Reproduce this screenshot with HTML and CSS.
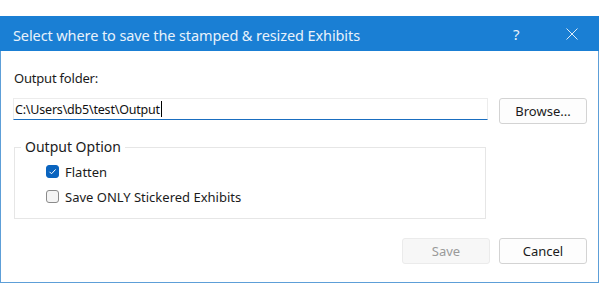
FILE: index.html
```html
<!DOCTYPE html>
<html>
<head>
<meta charset="utf-8">
<link rel="stylesheet" href="styles.css">
</head>
<body>
<div class="window">
  <div class="titlebar">
    <span class="title">Select where to save the stamped &amp; resized Exhibits</span>
    <span class="help">?</span>
    <span class="close"><svg width="12" height="12" viewBox="0 0 12 12"><path d="M0.5 0.5 L11.5 11.5 M11.5 0.5 L0.5 11.5" stroke="#dcebf8" stroke-width="1" fill="none"/></svg></span>
  </div>
  <div class="content">
    <div class="label">Output folder:</div>
    <div class="row">
      <div class="input"><span class="value">C:\Users\db5\test\Output</span><span class="caret"></span></div>
      <button class="btn browse">Browse...</button>
    </div>
    <fieldset class="group">
      <legend class="legend">Output Option</legend>
      <label class="check-row"><span class="box checked"><svg width="13" height="13" viewBox="0 0 13 13"><path d="M3.5 6.8 L5.5 8.8 L9.6 4.4" stroke="#ffffff" stroke-width="1" fill="none"/></svg></span><span class="check-text">Flatten</span></label>
      <label class="check-row"><span class="box"></span><span class="check-text">Save ONLY Stickered Exhibits</span></label>
    </fieldset>
    <div class="actions">
      <button class="btn disabled">Save</button>
      <button class="btn">Cancel</button>
    </div>
  </div>
</div>
</body>
</html>
```
FILE: styles.css
```css
html, body {
  margin: 0;
  padding: 0;
  background: #ffffff;
}
body {
  font-family: "Noto Sans", "Open Sans", sans-serif;
  color: #1b1b1b;
}
.window {
  margin-top: 16px;
  width: 597px;
  border: 1px solid #5d9fd8;
  border-top: none;
  background: #ffffff;
}
.titlebar {
  height: 35px;
  background: #1a7fd4;
  display: flex;
  align-items: center;
  color: #e8f2fb;
  margin-left: -1px;
  margin-right: -1px;
  padding-left: 13px;
}
.title {
  font-size: 14.5px;
  flex: 1;
  line-height: 20px;
  padding-top: 2px;
  letter-spacing: -0.1px;
}
.help {
  font-size: 15px;
  width: 16px;
  margin-right: 37px;
  line-height: 20px;
}
.close {
  width: 12px;
  height: 12px;
  margin-right: 21px;
  display: flex;
}
.content {
  padding: 18px 11px 18px 12px;
  display: flex;
  flex-direction: column;
}
.label {
  font-size: 13px;
  line-height: 18px;
  margin-left: 1px;
  height: 18px;
  margin-bottom: 11px;
  letter-spacing: -0.2px;
}
.row {
  display: flex;
  align-items: flex-start;
  gap: 11px;
}
.input {
  width: 472px;
  height: 20px;
  border: 1px solid #ececec;
  border-bottom: 1px solid #1a6ec0;
  display: flex;
  align-items: center;
  padding-left: 1px;
  font-size: 12.5px;
  color: #111;
}
.value {
  line-height: 18px;
  padding-top: 1px;
  letter-spacing: -0.2px;
}
.caret {
  width: 1px;
  height: 16px;
  background: #000;
  margin-left: 1px;
}
.btn {
  font-family: "Noto Sans", "Open Sans", sans-serif;
  font-size: 13px;
  width: 88px;
  height: 26px;
  border: 1px solid #d3d3d3;
  border-radius: 3px;
  background: #fdfdfd;
  color: #1b1b1b;
  padding: 0;
  line-height: 22px;
}
.group {
  margin: 14px 0 0 1px;
  width: 472px;
  box-sizing: border-box;
  border: 1px solid #e6e6e6;
  padding: 0 6px 9px 6px;
  min-width: 0;
  display: flex;
  flex-direction: column;
}
.legend {
  font-size: 14px;
  padding: 0 4px;
  line-height: 18px;
  color: #1b1b1b;
}
.check-row {
  display: flex;
  align-items: center;
  height: 25px;
  margin-left: 25px;
}
.check-row:first-of-type {
  margin-top: 3px;
}
.box {
  width: 13px;
  height: 13px;
  box-sizing: border-box;
  border: 1px solid #8b8b8b;
  border-radius: 3px;
  background: #f4f4f4;
  margin-right: 6px;
  display: flex;
}
.box.checked {
  background: #0a64bf;
  border-color: #0a64bf;
}
.box.checked svg {
  margin: -1px;
}
.check-text {
  font-size: 13px;
  line-height: 18px;
}
.actions {
  display: flex;
  justify-content: flex-end;
  gap: 9px;
  margin-top: 19px;
}
.actions .btn {
  height: 26px;
}
.btn.disabled {
  background: #f7f7f7;
  border-color: #ebebeb;
  color: #9a9a9a;
}
```
